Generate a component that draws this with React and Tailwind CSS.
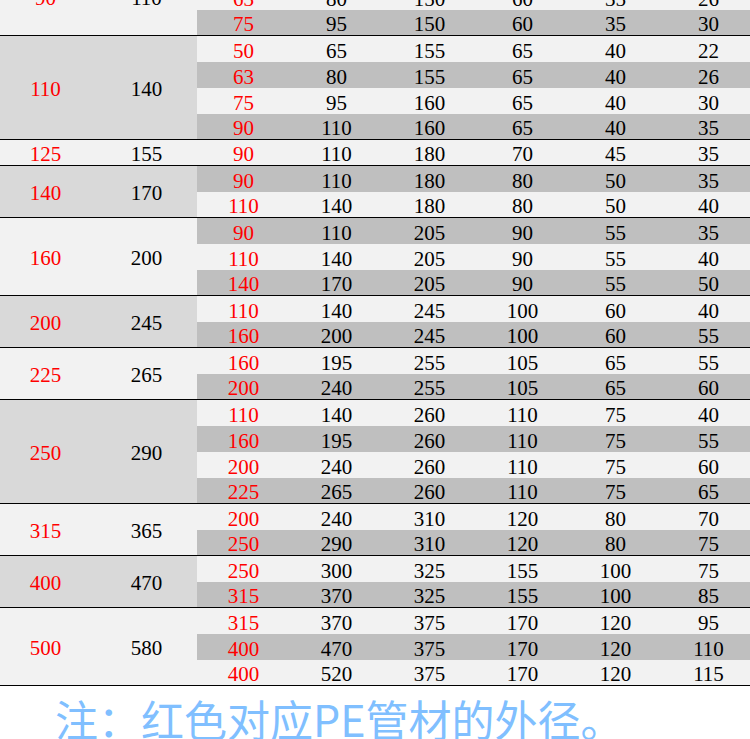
import React from "react";

const groups = [
  { od: "90", d: "110", rows: [["50", "65", "150", "60", "35", "22"], ["63", "80", "150", "60", "35", "26"], ["75", "95", "150", "60", "35", "30"]] },
  { od: "110", d: "140", rows: [["50", "65", "155", "65", "40", "22"], ["63", "80", "155", "65", "40", "26"], ["75", "95", "160", "65", "40", "30"], ["90", "110", "160", "65", "40", "35"]] },
  { od: "125", d: "155", rows: [["90", "110", "180", "70", "45", "35"]] },
  { od: "140", d: "170", rows: [["90", "110", "180", "80", "50", "35"], ["110", "140", "180", "80", "50", "40"]] },
  { od: "160", d: "200", rows: [["90", "110", "205", "90", "55", "35"], ["110", "140", "205", "90", "55", "40"], ["140", "170", "205", "90", "55", "50"]] },
  { od: "200", d: "245", rows: [["110", "140", "245", "100", "60", "40"], ["160", "200", "245", "100", "60", "55"]] },
  { od: "225", d: "265", rows: [["160", "195", "255", "105", "65", "55"], ["200", "240", "255", "105", "65", "60"]] },
  { od: "250", d: "290", rows: [["110", "140", "260", "110", "75", "40"], ["160", "195", "260", "110", "75", "55"], ["200", "240", "260", "110", "75", "60"], ["225", "265", "260", "110", "75", "65"]] },
  { od: "315", d: "365", rows: [["200", "240", "310", "120", "80", "70"], ["250", "290", "310", "120", "80", "75"]] },
  { od: "400", d: "470", rows: [["250", "300", "325", "155", "100", "75"], ["315", "370", "325", "155", "100", "85"]] },
  { od: "500", d: "580", rows: [["315", "370", "375", "170", "120", "95"], ["400", "470", "375", "170", "120", "110"], ["400", "520", "375", "170", "120", "115"]] },
];

export default function App() {
  let stripe = 0;

  return (
    <div className="w-[750px] h-[739px] overflow-hidden bg-white font-['Liberation_Serif',serif] text-[21px] leading-none text-black">
      <div className="w-[755px] -mt-[42px]">
        {groups.map((g, gi) => (
          <div key={`Group_${gi}`} className="flex border-b border-black">
            <div className={`flex w-[197px] shrink-0 items-center pt-[4px] ${gi % 2 ? "bg-[#d9d9d9]" : "bg-[#f2f2f2]"}`}>
              <span className="w-[91px] text-center text-[#ff0000]">{g.od}</span>
              <span className="w-[106px] pl-[5px] text-center">{g.d}</span>
            </div>
            <div className="flex flex-1 flex-col">
              {g.rows.map((r, ri) => {
                const grey = stripe++ % 2 === 0;
                const last = ri === g.rows.length - 1;
                return (
                  <div
                    key={`Row_${gi}_${ri}`}
                    className={`flex items-center ${last ? "h-[25px]" : "h-[26px]"} ${grey ? "bg-[#bfbfbf]" : "bg-[#f2f2f2]"}`}
                  >
                    {r.map((v, ci) => (
                      <span key={ci} className={`w-[93px] text-center pt-[4px] ${ci === 0 ? "text-[#ff0000]" : ""}`}>
                        {v}
                      </span>
                    ))}
                  </div>
                );
              })}
            </div>
          </div>
        ))}
      </div>
      <p className="mt-[11px] pl-[55px] whitespace-nowrap font-['Noto_Sans_CJK_SC',sans-serif] text-[43px] leading-none text-[#80bfff]">
        注：红色对应PE管材的外径。
      </p>
    </div>
  );
}
